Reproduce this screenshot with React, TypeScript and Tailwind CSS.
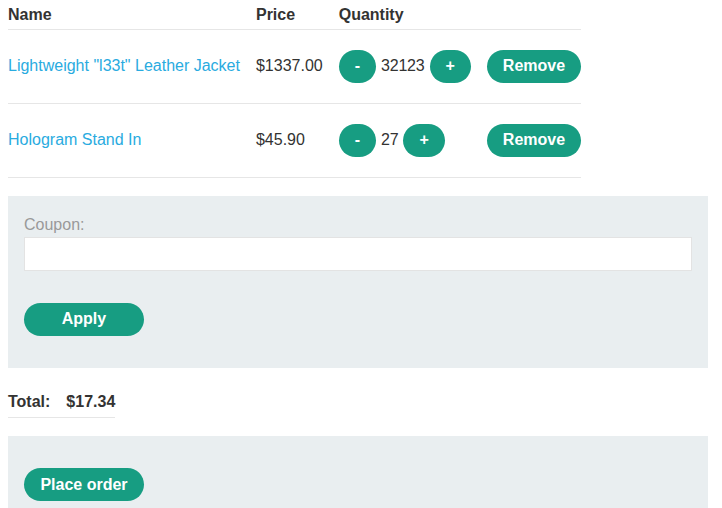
const items = [
  { name: 'Lightweight "l33t" Leather Jacket', price: '$1337.00', qty: 32123 },
  { name: 'Hologram Stand In', price: '$45.90', qty: 27 },
];

const btn =
  'inline-flex h-[33px] items-center justify-center rounded-full bg-[#179d82] px-4 text-[16px] font-bold text-white';

export default function App() {
  return (
    <div className="min-h-[508px] bg-white px-2 text-[16px] text-[#333332] [font-family:'Liberation_Sans',Arial,sans-serif]">
      <table className="border-collapse">
        <thead>
          <tr className="border-b border-[#e6e6e6]">
            <th className="h-[29px] pr-4 pt-[2px] text-left align-middle font-bold">Name</th>
            <th className="pr-4 pt-[2px] text-left align-middle font-bold">Price</th>
            <th className="pr-4 pt-[2px] text-left align-middle font-bold">Quantity</th>
            <th className="pt-[2px]"></th>
          </tr>
        </thead>
        <tbody>
          {items.map((item) => (
            <tr key={item.name} className="border-b border-[#e6e6e6]">
              <td className="h-[74px] pr-4 align-middle">
                <a href="#" className="text-[#29abe0]">
                  {item.name}
                </a>
              </td>
              <td className="pr-4 align-middle">{item.price}</td>
              <td className="w-[147px] pr-4 align-middle">
                <div className="flex items-center gap-[5px]">
                  <button className={btn}>-</button>
                  <span className="tracking-[-0.2px]">{item.qty}</span>
                  <button className={btn}>+</button>
                </div>
              </td>
              <td className="align-middle">
                <button className={btn}>Remove</button>
              </td>
            </tr>
          ))}
        </tbody>
      </table>

      {/* Cupón */}
      <div className="mt-[18px] w-[700px] bg-[#e9eef0] px-4 pt-[19px] pb-[32px]">
        <label htmlFor="coupon" className="block leading-[20px] text-[#999999]">
          Coupon:
        </label>
        <input
          id="coupon"
          type="text"
          className="mt-[2px] block h-[34px] w-full border border-[#e3e3e3] bg-white px-2 outline-none"
        />
        <button className={`${btn} mt-[32px] min-w-[120px]`}>Apply</button>
      </div>

      {/* Total */}
      <table className="mt-[17px] border-collapse">
        <tbody>
          <tr className="border-b border-[#e6e6e6]">
            <th className="h-[33px] pr-4 pt-[2px] text-left align-middle font-bold">Total:</th>
            <th className="pt-[2px] text-left align-middle font-bold">$17.34</th>
          </tr>
        </tbody>
      </table>

      <div className="mt-[18px] w-[700px] bg-[#e9eef0] px-4 pt-[32px] pb-[32px]">
        <button className={`${btn} min-w-[120px]`}>Place order</button>
      </div>
    </div>
  );
}
